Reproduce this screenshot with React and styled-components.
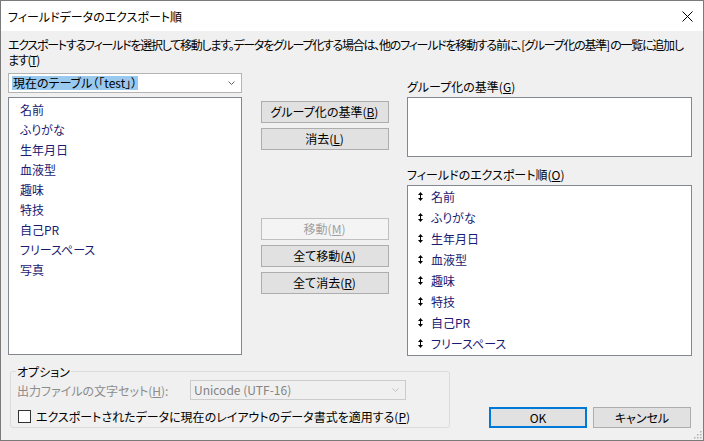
import React from 'react';
import styled, { createGlobalStyle } from 'styled-components';

const GlobalStyle = createGlobalStyle`
  html, body { margin: 0; padding: 0; background: #fff; }
  body {
    font-family: "Noto Sans CJK JP", "Noto Sans", sans-serif;
    font-size: 12px;
    font-feature-settings: "palt";
    color: #000;
  }
  * { box-sizing: border-box; }
`;

const Frame = styled.div`
  position: relative;
  width: 704px;
  height: 441px;
  border: 1px solid #7a7a7a;
  display: flex;
  flex-direction: column;
  background: #f0f0f0;
`;

const TitleBar = styled.div`
  height: 30px;
  background: #fff;
  display: flex;
  align-items: center;
  justify-content: space-between;
  padding: 0 10px 0 7px;
`;

const Title = styled.span`
  line-height: 15px;
  white-space: nowrap;
`;

const Body = styled.div`
  flex: 1;
  padding: 6px 11px 11px 7px;
  display: flex;
  flex-direction: column;
`;

const Description = styled.p`
  margin: 0;
  line-height: 15px;
  white-space: nowrap;
  letter-spacing: -1.25px;
`;

const MainGrid = styled.div`
  display: grid;
  grid-template-columns: 234px 128px 285px;
  justify-content: space-between;
  margin-top: 6px;
`;

const Column = styled.div`
  display: flex;
  flex-direction: column;
`;

const LeftColumn = styled(Column)`
  gap: 4px;
`;

const MiddleColumn = styled(Column)`
  padding-top: 28px;
`;

const ButtonGroup = styled.div`
  display: flex;
  flex-direction: column;
  gap: 5px;
  margin-top: ${p => p.$offset || 0}px;
`;

const Combo = styled.div`
  height: 20px;
  border: 1px solid ${p => (p.$disabled ? '#cccccc' : '#b4b4b4')};
  background: ${p => (p.$disabled ? '#f0f0f0' : '#fff')};
  color: ${p => (p.$disabled ? '#838383' : '#000')};
  display: flex;
  align-items: center;
  justify-content: space-between;
  padding: 0 6px 0 3px;
  line-height: 14px;
  width: ${p => (p.$width ? `${p.$width}px` : 'auto')};
`;

const Selected = styled.span`
  background: #99c9ef;
  padding: 0 1px;
  white-space: nowrap;
`;

const ListBox = styled.div`
  height: ${p => p.$height}px;
  border: 1px solid #828790;
  background: #fff;
  padding-top: ${p => p.$padTop || 0}px;
`;

const ListItem = styled.div`
  height: ${p => p.$rowHeight}px;
  display: flex;
  align-items: center;
  gap: 8px;
  padding-left: ${p => p.$indent}px;
  color: #1a1a72;
  white-space: nowrap;
`;

const Label = styled.div`
  line-height: 15px;
  margin-top: ${p => p.$top}px;
  margin-bottom: 3px;
  white-space: nowrap;
`;

const Button = styled.button`
  height: ${p => (p.$tall ? 22 : 21)}px;
  width: ${p => (p.$width ? `${p.$width}px` : '100%')};
  margin: 0;
  padding: 0;
  font: inherit;
  font-feature-settings: "palt";
  line-height: 14px;
  background: ${p => (p.disabled ? '#f4f4f4' : '#e1e1e1')};
  color: ${p => (p.disabled ? '#a0a0a0' : '#000')};
  border: 1px solid ${p => (p.$default ? '#0078d7' : p.disabled ? '#bfbfbf' : '#adadad')};
  box-shadow: ${p => (p.$default ? 'inset 0 0 0 1px #0078d7' : 'none')};
`;

const BottomRow = styled.div`
  display: flex;
  align-items: flex-end;
  margin-top: 8px;
`;

const GroupBox = styled.fieldset`
  margin: 0 0 0 2px;
  width: 440px;
  padding: 0 7px 3px 6px;
  border: 1px solid #dcdcdc;
  border-radius: 3px;
`;

const Legend = styled.legend`
  padding: 0 1px;
  margin-left: -1px;
  line-height: 15px;
`;

const CharsetRow = styled.div`
  display: grid;
  grid-template-columns: 173px 216px;
  align-items: center;
  margin-top: 1px;
`;

const DisabledText = styled.span`
  color: #8c8c8c;
  white-space: nowrap;
`;

const CheckRow = styled.label`
  display: flex;
  align-items: center;
  gap: 5px;
  height: 16px;
  margin-top: 8px;
  white-space: nowrap;
`;

const CheckBox = styled.span`
  width: 13px;
  height: 13px;
  border: 1px solid #333;
  background: #fff;
  margin-left: 1px;
`;

const DialogButtons = styled.div`
  display: flex;
  gap: 6px;
  margin-left: auto;
  margin-right: 1px;
`;

const Grip = styled.svg`
  position: absolute;
  right: 1px;
  bottom: 1px;
`;

const Chevron = ({ color = '#606060' }) => (
  <svg width="7" height="4" viewBox="0 0 7 4">
    <polyline points="0.5,0.5 3.5,3.5 6.5,0.5" fill="none" stroke={color} strokeWidth="1" />
  </svg>
);

const MoveIcon = () => (
  <svg width="5" height="9" viewBox="0 0 5 9">
    <polygon points="2.5,0 5,3 0,3" fill="#000" />
    <rect x="2" y="3" width="1" height="3" fill="#000" />
    <polygon points="0,6 5,6 2.5,9" fill="#000" />
  </svg>
);

const CloseIcon = () => (
  <svg width="11" height="11" viewBox="0 0 11 11">
    <path d="M0.5 0.5 L10.5 10.5 M10.5 0.5 L0.5 10.5" stroke="#000" strokeWidth="1" />
  </svg>
);

const fields = ['名前', 'ふりがな', '生年月日', '血液型', '趣味', '特技', '自己PR', 'フリースペース', '写真'];
const exportFields = fields.slice(0, 8);

export default function App() {
  return (
    <>
      <GlobalStyle />
      <Frame>
        <TitleBar>
          <Title>フィールドデータのエクスポート順</Title>
          <CloseIcon />
        </TitleBar>
        <Body>
          <Description>
            エクスポートするフィールドを選択して移動します。データをグループ化する場合は、他のフィールドを移動する前に、[グループ化の基準] の一覧に追加し
            <br />
            ます(<u>T</u>)
          </Description>

          <MainGrid>
            <LeftColumn>
              <Combo>
                <Selected>現在のテーブル（「test」）</Selected>
                <Chevron />
              </Combo>
              <ListBox $height={258} $padTop={1}>
                {fields.map(f => (
                  <ListItem key={f} $rowHeight={20} $indent={11}>{f}</ListItem>
                ))}
              </ListBox>
            </LeftColumn>

            <MiddleColumn>
              <ButtonGroup>
                <Button $tall>グループ化の基準(<u>B</u>)</Button>
                <Button $tall>消去(<u>L</u>)</Button>
              </ButtonGroup>
              <ButtonGroup $offset={68}>
                <Button $tall disabled>移動(<u>M</u>)</Button>
                <Button $tall>全て移動(<u>A</u>)</Button>
                <Button $tall>全て消去(<u>R</u>)</Button>
              </ButtonGroup>
            </MiddleColumn>

            <Column>
              <Label $top={6}>グループ化の基準(<u>G</u>)</Label>
              <ListBox $height={60} />
              <Label $top={10}>フィールドのエクスポート順(<u>O</u>)</Label>
              <ListBox $height={171}>
                {exportFields.map(f => (
                  <ListItem key={f} $rowHeight={21} $indent={10}>
                    <MoveIcon />
                    {f}
                  </ListItem>
                ))}
              </ListBox>
            </Column>
          </MainGrid>

          <BottomRow>
            <GroupBox>
              <Legend>オプション</Legend>
              <CharsetRow>
                <DisabledText>出力ファイルの文字セット(<u>H</u>):</DisabledText>
                <Combo $disabled $width={216}>
                  <span>Unicode (UTF-16)</span>
                  <Chevron color="#c0c0c0" />
                </Combo>
              </CharsetRow>
              <CheckRow>
                <CheckBox />
                <span>エクスポートされたデータに現在のレイアウトのデータ書式を適用する(<u>P</u>)</span>
              </CheckRow>
            </GroupBox>
            <DialogButtons>
              <Button $default $width={98}>OK</Button>
              <Button $width={98}>キャンセル</Button>
            </DialogButtons>
          </BottomRow>
        </Body>
        <Grip width="9" height="9" viewBox="0 0 9 9">
          {[[7, 1], [7, 4], [4, 4], [7, 7], [4, 7], [1, 7]].map(([x, y]) => (
            <rect key={`${x}-${y}`} x={x} y={y} width="1.5" height="1.5" fill="#b0b0b0" />
          ))}
        </Grip>
      </Frame>
    </>
  );
}
